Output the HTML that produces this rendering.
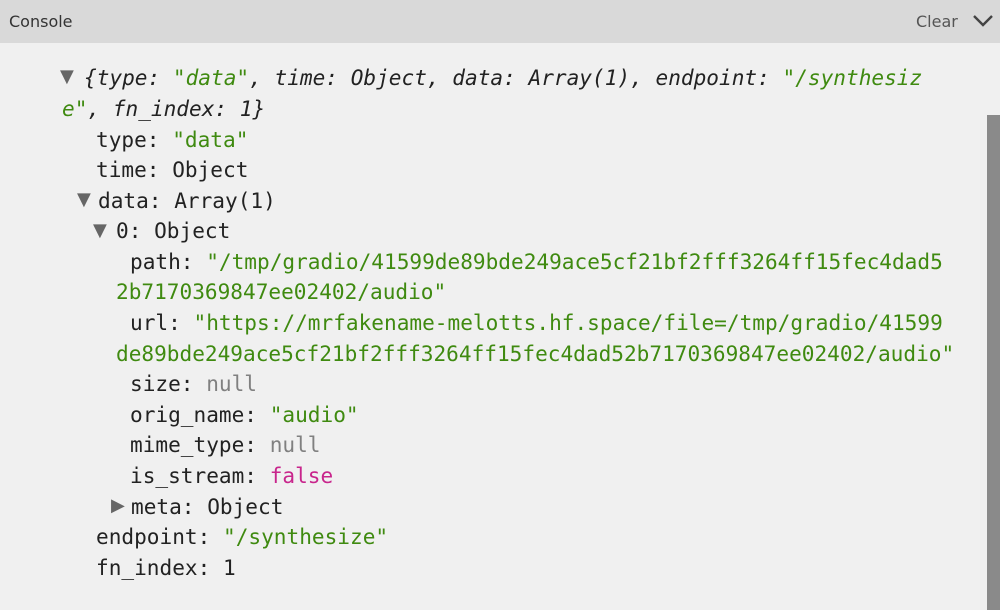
<!DOCTYPE html>
<html><head><meta charset="utf-8"><style>
body{margin:0;width:1000px;height:610px;background:#f0f0f0;overflow:hidden;position:relative;font-family:"DejaVu Sans Mono","Liberation Mono",monospace;}
.hdr{position:absolute;left:0;top:0;width:1000px;height:43px;background:#d9d9d9;font-family:"DejaVu Sans","Liberation Sans",sans-serif;font-size:16px;color:#333;}
.hdr .t{position:absolute;left:9px;top:12px;}
.hdr .c{position:absolute;left:916px;top:12px;color:#555;}
.sb{position:absolute;left:987px;top:115px;width:13px;height:495px;background:#8a8a8a;}
.l{position:absolute;font-size:21.1px;line-height:30px;color:#222;white-space:pre;}
.g{color:#3f8a10}.n{color:#808080}.f{color:#c8258c}
.i{font-style:italic}
.tri{position:absolute;font-size:18px;color:#666;font-family:"DejaVu Sans",sans-serif;line-height:20px;}
</style></head><body>
<div class="hdr"><span class="t">Console</span><span class="c">Clear</span>
<svg style="position:absolute;left:972px;top:14px" width="22" height="14" viewBox="0 0 22 14"><path d="M2 2 L11 11 L20 2" fill="none" stroke="#444" stroke-width="2.4"/></svg></div>
<div class="sb"></div>
<span class="tri" style="left:60px;top:67px">▼</span>
<div class="l i" style="left:84px;top:63px">{type: <span class="g">"data"</span>, time: Object, data: Array(1), endpoint: <span class="g">"/synthesiz</span></div>
<div class="l i" style="left:62px;top:94px"><span class="g">e"</span>, fn_index: 1}</div>
<div class="l" style="left:96px;top:125px">type: <span class="g">"data"</span></div>
<div class="l" style="left:96px;top:155px">time: Object</div>
<span class="tri" style="left:77px;top:190px">▼</span>
<div class="l" style="left:98px;top:186px">data: Array(1)</div>
<span class="tri" style="left:93px;top:221px">▼</span>
<div class="l" style="left:116px;top:216px">0: Object</div>
<div class="l" style="left:130px;top:247px">path: <span class="g">"/tmp/gradio/41599de89bde249ace5cf21bf2fff3264ff15fec4dad5</span></div>
<div class="l g" style="left:116px;top:277px">2b7170369847ee02402/audio"</div>
<div class="l" style="left:130px;top:308px">url: <span class="g">"https://mrfakename-melotts.hf.space/file=/tmp/gradio/41599</span></div>
<div class="l g" style="left:116px;top:339px">de89bde249ace5cf21bf2fff3264ff15fec4dad52b7170369847ee02402/audio"</div>
<div class="l" style="left:130px;top:369px">size: <span class="n">null</span></div>
<div class="l" style="left:130px;top:400px">orig_name: <span class="g">"audio"</span></div>
<div class="l" style="left:130px;top:430px">mime_type: <span class="n">null</span></div>
<div class="l" style="left:130px;top:461px">is_stream: <span class="f">false</span></div>
<span class="tri" style="left:111px;top:496px">▶</span>
<div class="l" style="left:131px;top:492px">meta: Object</div>
<div class="l" style="left:96px;top:522px">endpoint: <span class="g">"/synthesize"</span></div>
<div class="l" style="left:96px;top:553px">fn_index: 1</div>
</body></html>
